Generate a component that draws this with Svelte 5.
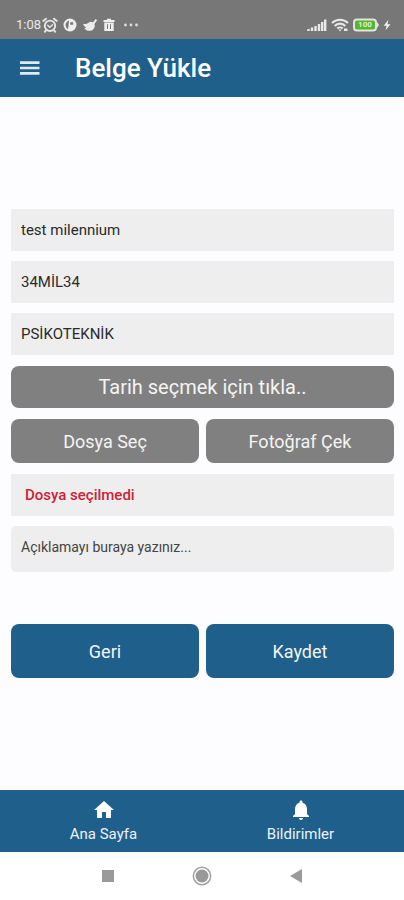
<script lang="ts">
  let driver = $state('test milennium');
  let plate = $state('34MİL34');
  let docType = $state('PSİKOTEKNİK');
  let note = $state('');
</script>

<div class="screen">
  <div class="status">
    <div class="status-left">
      <span class="clock">1:08</span>
      <svg class="alarm" width="16" height="16" viewBox="0 0 16 16" aria-hidden="true">
        <g fill="none" stroke="#e6e6e6" stroke-width="1.9" stroke-linecap="round">
          <circle cx="8" cy="8.8" r="5.2" />
          <path d="M1.3 4 4 1.7M14.7 4 12 1.7M3.8 13.6l-1 1.2M12.2 13.6l1 1.2" />
          <path d="M5.6 8.2 7.8 10.2 10.6 7.7" stroke-width="1.4" />
        </g>
      </svg>
      <svg width="14" height="14" viewBox="0 0 14 14" aria-hidden="true">
        <circle cx="7" cy="7" r="6.5" fill="#efefef" />
        <path d="M5 11.2a4.6 4.6 0 0 1-1-7.4 6 6 0 0 1 2-1.300L5.600 7zM7.200 4.200h3v2.600h-3z" fill="#777" />
      </svg>
      <svg width="16" height="14" viewBox="0 0 16 14" aria-hidden="true">
        <path d="M1 5.800c2 .5 4 .2 5.600-1.100 1.500-1.200 3.200-1 4.200-.2L13.700 1l1.400 1.200-2.700 3.900c1 1.800.2 4.400-1.800 5.800C7.500 13.800 3.500 12.500 2.400 9.900l2-.1C2.700 9 1.500 7.500 1 5.800z" fill="#ececec" />
      </svg>
      <svg width="12" height="14" viewBox="0 0 12 14" aria-hidden="true">
        <path d="M4 .8h4V2h3.500v2H.5V2H4zM1.300 4.500h9.400V13H1.300z" fill="#efefef" />
        <path d="M4.500 6.200v4.800M7.500 6.200v4.800" stroke="#777" stroke-width="1" />
      </svg>
      <svg class="more" width="16" height="4" viewBox="0 0 16 4" aria-hidden="true">
        <g fill="#dcdcdc">
          <circle cx="2.5" cy="2" r="1.4" />
          <circle cx="8" cy="2" r="1.4" />
          <circle cx="13.5" cy="2" r="1.4" />
        </g>
      </svg>
    </div>
    <div class="status-right">
      <svg width="20" height="14" viewBox="0 0 20 14" aria-hidden="true">
        <path d="M1.500 13v-2M5 13V9.500M8.500 13V8M12 13V6M15.200 13V4M18.200 13V1.500" stroke="#e8e8e8" stroke-width="2.400" />
      </svg>
      <svg width="18" height="14" viewBox="0 0 18 14" aria-hidden="true">
        <g fill="none" stroke="#e8e8e8" stroke-width="2.100">
          <path d="M1 5c4.500-4.400 11.500-4.400 16 0" />
          <path d="M3.700 7.900c3-3 7.600-3 10.600 0" />
          <path d="M6.300 10.600c1.500-1.500 3.900-1.500 5.400 0" />
        </g>
        <path d="M7.500 11.500h3L9 13.400zM13 10.500h3.500V13H13z" fill="#e8e8e8" />
      </svg>
      <span class="battery">
        <svg width="26" height="14" viewBox="0 0 26 14" aria-hidden="true">
          <rect x="1" y="1.500" width="22" height="11" rx="3" fill="#58b52d" stroke="#e4e4e4" stroke-width="2" />
          <path d="M24 4.800c1.600.4 1.600 4 0 4.400z" fill="#e4e4e4" stroke="#e4e4e4" />
        </svg>
        <span class="level">100</span>
      </span>
      <svg width="8" height="12" viewBox="0 0 8 12" aria-hidden="true">
        <path d="M5.400.8.700 6.700h2.900L2.600 11.200 7.500 5.200H4.400z" fill="#f2f2f2" />
      </svg>
    </div>
  </div>

  <header>
    <button class="menu" type="button" aria-label="Menü">
      <svg width="20" height="16" viewBox="0 0 20 16">
        <path d="M0 2.600h19.500M0 8h19.500M0 13.400h19.500" stroke="#dfeaf5" stroke-width="2.600" />
      </svg>
    </button>
    <h1>Belge Yükle</h1>
  </header>

  <main>
    <form onsubmit={(e) => e.preventDefault()}>
      <div class="group">
        <input type="text" aria-label="Sürücü" bind:value={driver} />
        <input type="text" aria-label="Plaka" bind:value={plate} />
        <input type="text" aria-label="Belge türü" bind:value={docType} />
      </div>

      <button class="grey date" type="button">Tarih seçmek için tıkla..</button>

      <div class="pair">
        <button class="grey" type="button">Dosya Seç</button>
        <button class="grey" type="button">Fotoğraf Çek</button>
      </div>

      <div class="group">
        <p class="file">Dosya seçilmedi</p>
        <textarea rows="1" aria-label="Açıklama" placeholder="Açıklamayı buraya yazınız..." bind:value={note}></textarea>
      </div>

      <div class="pair actions">
        <button class="blue" type="button">Geri</button>
        <button class="blue" type="submit">Kaydet</button>
      </div>
    </form>
  </main>

  <nav class="tabs">
    <a href="#home">
      <svg width="24" height="24" viewBox="0 0 24 24" aria-hidden="true">
        <path d="M10 20v-6h4v6h5v-8h3L12 3 2 12h3v8z" fill="#fff" />
      </svg>
      Ana Sayfa
    </a>
    <a href="#notifications">
      <svg width="24" height="24" viewBox="0 0 24 24" aria-hidden="true">
        <path d="M12 22c1.100 0 2-.9 2-2h-4c0 1.100.9 2 2 2zm6-6v-5c0-3.070-1.630-5.640-4.500-6.320V4c0-.83-.67-1.500-1.500-1.500s-1.500.67-1.500 1.500v.68C7.640 5.360 6 7.920 6 11v5l-2 2v1h16v-1z" fill="#fff" />
      </svg>
      Bildirimler
    </a>
  </nav>

  <div class="system">
    <button type="button" aria-label="Son uygulamalar">
      <svg width="20" height="20" viewBox="0 0 20 20"><path d="M4 4h12v12H4z" fill="#9a9a9a" /></svg>
    </button>
    <button type="button" aria-label="Ana ekran">
      <svg width="20" height="20" viewBox="0 0 20 20">
        <circle cx="10" cy="10" r="8.700" fill="none" stroke="#a2a2a2" stroke-width="1.500" />
        <circle cx="10" cy="10" r="6.500" fill="#999" />
      </svg>
    </button>
    <button type="button" aria-label="Geri dön">
      <svg width="20" height="20" viewBox="0 0 20 20"><path d="M16 3v14L4 10z" fill="#9a9a9a" /></svg>
    </button>
  </div>
</div>

<style>
  :global(body) {
    margin: 0;
    background: #fdfcff;
    font-family: Roboto, "Noto Sans", sans-serif;
  }

  .screen {
    display: flex;
    flex-direction: column;
    min-height: 100vh;
  }

  svg {
    display: block;
    flex: none;
  }

  button,
  input,
  textarea {
    box-sizing: border-box;
    margin: 0;
    border: none;
    font-family: inherit;
  }

  button {
    padding: 0;
    cursor: pointer;
  }

  .status {
    display: flex;
    justify-content: space-between;
    box-sizing: border-box;
    height: 39px;
    padding: 10px 13px 0 16px;
    background: #777;
  }

  .status-left,
  .status-right {
    display: flex;
    align-items: center;
    gap: 5px;
  }

  .status-right {
    gap: 4px;
  }

  .clock {
    margin-right: -4px;
    color: #e8e8e8;
    font-size: 13px;
    line-height: 16px;
  }

  .more {
    margin-left: 3px;
  }

  .battery {
    position: relative;
  }

  .level {
    position: absolute;
    inset: 0 2px 0 0;
    color: #d8f5c8;
    font-size: 8px;
    font-weight: 700;
    line-height: 14px;
    text-align: center;
  }

  header {
    display: flex;
    align-items: center;
    gap: 35px;
    height: 58px;
    padding: 0 20px;
    background: #1f5f8b;
  }

  .menu {
    background: none;
  }

  h1 {
    margin: 0;
    color: #fff;
    font-size: 26px;
    font-weight: 500;
    line-height: 32px;
  }

  main {
    display: flex;
    flex: 1;
    flex-direction: column;
    justify-content: center;
    padding: 0 10px 0 11px;
  }

  form {
    display: flex;
    flex-direction: column;
    gap: 11px;
  }

  .group {
    display: flex;
    flex-direction: column;
    gap: 10px;
  }

  input,
  .file,
  textarea {
    width: 100%;
    padding: 0 10px;
    background: #eee;
    color: #2b2b2b;
    font-size: 15px;
    outline: none;
  }

  input {
    height: 42px;
  }

  .file {
    box-sizing: border-box;
    margin: 0;
    padding: 0 14px;
    color: #cf2136;
    font-weight: 500;
    line-height: 42px;
  }

  textarea {
    display: block;
    height: 46px;
    padding: 11px 10px;
    border-radius: 5px;
    font-size: 14px;
    line-height: 20px;
    resize: none;
  }

  textarea::placeholder {
    color: #444;
    opacity: 1;
  }

  .pair {
    display: grid;
    grid-template-columns: 1fr 1fr;
    gap: 7px;
  }

  .actions {
    margin-top: 41px;
  }

  .grey,
  .blue {
    height: 44px;
    border-radius: 8px;
    color: #f4f4f4;
    font-size: 18px;
  }

  .grey {
    background: #808080;
  }

  .date {
    height: 42px;
    font-size: 20px;
  }

  .blue {
    height: 54px;
    background: #1f5f8b;
  }

  .tabs {
    display: grid;
    grid-template-columns: 1fr 1fr;
    height: 62px;
    padding: 0 5px;
    background: #1f5f8b;
  }

  .tabs a {
    display: flex;
    flex-direction: column;
    align-items: center;
    padding-top: 8px;
    color: #eaf3fa;
    font-size: 15px;
    line-height: 24px;
    text-decoration: none;
  }

  .system {
    display: grid;
    grid-template-columns: repeat(3, 94px);
    justify-content: center;
    height: 48px;
    background: #fff;
  }

  .system button {
    display: grid;
    place-items: center;
    background: none;
  }
</style>
